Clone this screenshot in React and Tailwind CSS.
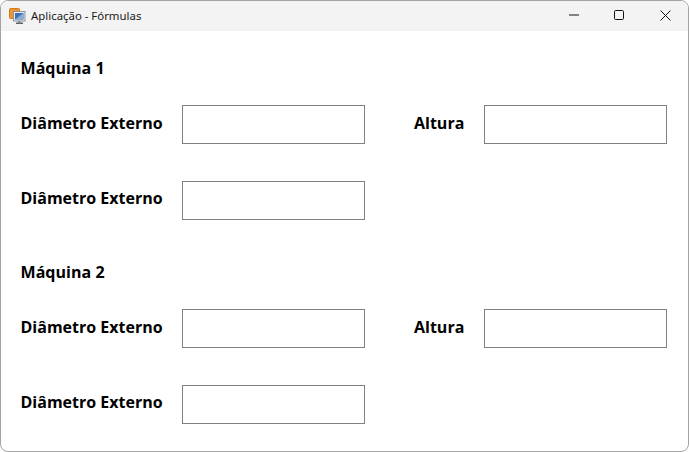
import React from "react";

function AppIcon() {
  return (
    <svg width="17" height="17" viewBox="0 0 17 17" className="shrink-0">
      <rect x="0.5" y="0.5" width="10" height="10" rx="1" fill="#ef9530" stroke="#d07a1c" />
      <rect x="4.5" y="3.5" width="11.5" height="9.5" fill="#e9ecf0" stroke="#8d9197" />
      <rect x="6" y="5" width="8.5" height="6.5" fill="#3f6fb5" />
      <path d="M6 11.5 L14.5 5 V11.5 Z" fill="#88aad8" />
      <rect x="9" y="13" width="2.5" height="1.5" fill="#8a8e94" />
      <rect x="7" y="14.5" width="7" height="1.5" fill="#5c6066" />
    </svg>
  );
}

function Field({ label, labelClass }) {
  return (
    <div className="flex items-center">
      <span className={`text-[16px] font-bold leading-5 text-black whitespace-nowrap ${labelClass}`}>{label}</span>
      <div className="w-[183px] h-[39px] border border-[#808080] bg-white" />
    </div>
  );
}

function Machine({ title, className }) {
  return (
    <section className={className}>
      <h2 className="text-[16px] font-bold leading-5 text-black tracking-[0.05px]">{title}</h2>
      <div className="flex mt-[27px]">
        <Field label="Diâmetro Externo" labelClass="w-[161.5px] pb-[4px]" />
        <div className="ml-[49px]">
          <Field label="Altura" labelClass="w-[70px] pb-[4px]" />
        </div>
      </div>
      <div className="mt-[37px]">
        <Field label="Diâmetro Externo" labelClass="w-[161.5px] pb-[6px]" />
      </div>
    </section>
  );
}

export default function App() {
  return (
    <div className="w-[689px] h-[452px] bg-white" style={{ fontFamily: '"Open Sans", "Noto Sans", sans-serif' }}>
      <div className="w-full h-full border border-[#a3a3a3] rounded-lg overflow-hidden bg-white flex flex-col">
        <header className="h-[30px] shrink-0 bg-[#f3f3f3] flex items-center">
          <div className="pl-[8px] flex items-center gap-[5px]">
            <AppIcon />
            <span className="text-[11.4px] text-[#1a1a1a] leading-4" style={{ fontFamily: '"Noto Sans", sans-serif' }}>Aplicação - Fórmulas</span>
          </div>
          <div className="ml-auto flex items-start self-start">
            <div className="w-[46px] h-[28px] flex items-center justify-center">
              <svg width="12" height="10" viewBox="0 0 12 10"><path d="M2 5H12" stroke="#111" strokeWidth="1" /></svg>
            </div>
            <div className="w-[46px] h-[28px] flex items-center justify-center">
              <svg width="10" height="10" viewBox="0 0 10 10"><rect x="0.5" y="0.5" width="9" height="9" rx="1.2" fill="none" stroke="#111" strokeWidth="1" /></svg>
            </div>
            <div className="w-[46px] h-[29px] flex items-center justify-center">
              <svg width="11" height="11" viewBox="0 0 11 11"><path d="M0.5 0.5L10.5 10.5M10.5 0.5L0.5 10.5" stroke="#111" strokeWidth="1" /></svg>
            </div>
          </div>
        </header>
        <main className="pl-[19.5px] flex-1">
          <Machine title="Máquina 1" className="pt-[27px]" />
          <Machine title="Máquina 2" className="pt-[42px]" />
        </main>
      </div>
    </div>
  );
}
